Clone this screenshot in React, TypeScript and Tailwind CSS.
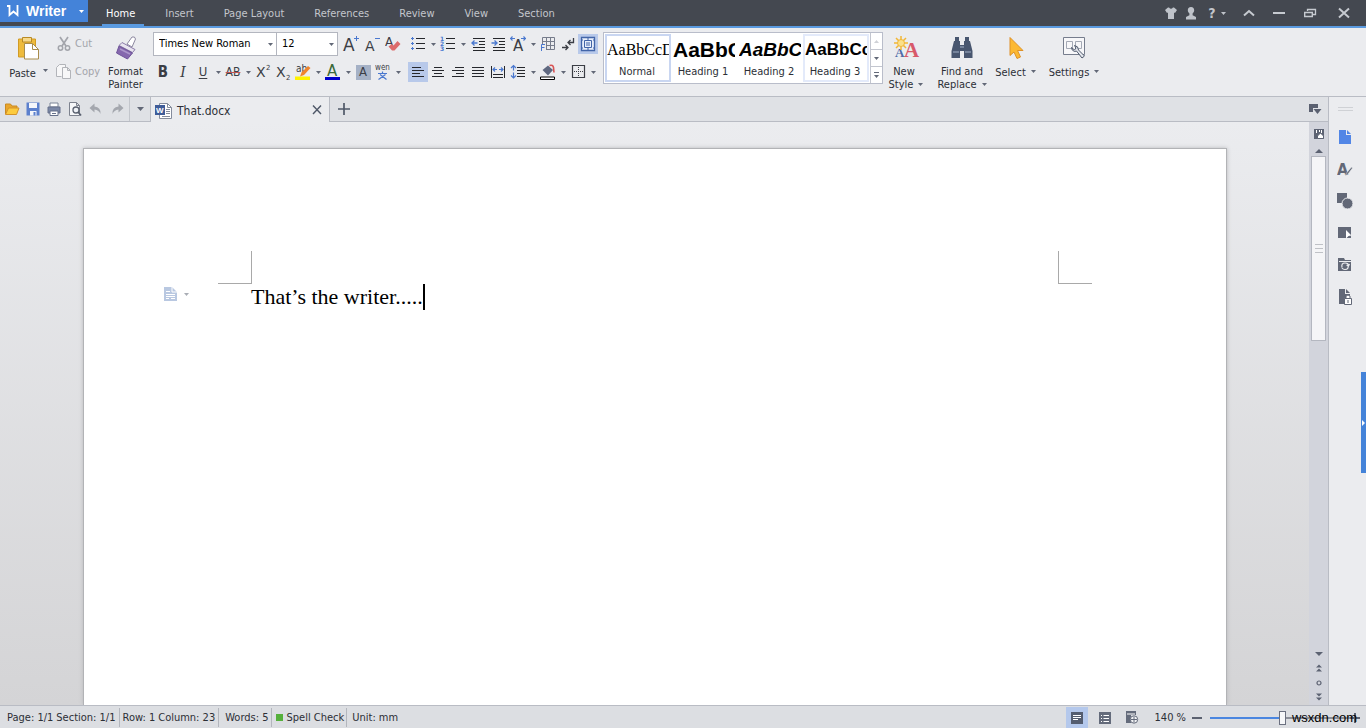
import type { ReactNode } from 'react'
import clsx from 'clsx'

const menuTabs = ['Insert', 'Page Layout', 'References', 'Review', 'View', 'Section']

const styles = [
  { name: 'Normal', sample: 'AaBbCcD', font: "font-['Liberation_Serif',serif] text-[16px]", border: 'border-[#c9d6f1]' },
  { name: 'Heading 1', sample: 'AaBbC', font: "font-['Liberation_Sans',sans-serif] text-[21px] font-bold", border: 'border-white' },
  { name: 'Heading 2', sample: 'AaBbC', font: "font-['Liberation_Sans',sans-serif] text-[19px] font-bold italic", border: 'border-white' },
  { name: 'Heading 3', sample: 'AaBbCc', font: "font-['Liberation_Sans',sans-serif] text-[17px] font-bold", border: 'border-[#e3eafa]' },
]

const INK = '#3b3e45'
const BLUE = '#4a78cf'
const SLATE = '#626877'

type IconProps = { children: ReactNode; size?: number; className?: string }

function Icon({ children, size = 16, className }: IconProps) {
  return (
    <svg width={size} height={size} viewBox={`0 0 ${size} ${size}`} fill="none" className={clsx('shrink-0', className)} aria-hidden="true">
      {children}
    </svg>
  )
}

function Glyph({ x, y, size, fill = INK, font = 'DejaVu Sans', bold, children }: { x: number; y: number; size: number; fill?: string; font?: string; bold?: boolean; children: string }) {
  return (
    <text x={x} y={y} fontSize={size} fill={fill} fontFamily={font} fontWeight={bold ? 'bold' : 'normal'}>
      {children}
    </text>
  )
}

function Caret({ color = SLATE, className }: { color?: string; className?: string }) {
  return (
    <svg width="5" height="3" viewBox="0 0 5 3" className={clsx('shrink-0', className)} aria-hidden="true">
      <path d="M0 0h5L2.500 3z" fill={color} />
    </svg>
  )
}

function Tool({ label, active, children }: { label: string; active?: boolean; children: ReactNode }) {
  return (
    <button aria-label={label} title={label} className={clsx('flex h-5 w-5 shrink-0 items-center justify-center', active && 'bg-[#b8c9ea]')}>
      {children}
    </button>
  )
}

function More({ label }: { label: string }) {
  return (
    <button aria-label={label} className="flex h-5 w-[10px] shrink-0 items-center justify-center">
      <Caret />
    </button>
  )
}

function Lines({ rows, color = '#25272c' }: { rows: number[][]; color?: string }) {
  return (
    <g fill={color} shapeRendering="crispEdges">
      {rows.map(([x, y, w], i) => (
        <rect key={i} x={x} y={y} width={w} height="1" />
      ))}
    </g>
  )
}

function Combo({ label, value, options, className }: { label: string; value: string; options: string[]; className: string }) {
  return (
    <div className={clsx('relative h-6 border border-[#b3b6bf] bg-white', className)}>
      <select aria-label={label} defaultValue={value} className="h-full w-full appearance-none bg-transparent pl-[5px] text-black outline-none">
        {options.map((o) => (
          <option key={o}>{o}</option>
        ))}
      </select>
      <Caret className="pointer-events-none absolute top-[10px] right-[3px]" />
    </div>
  )
}

function TitleBar() {
  return (
    <header className="flex h-7 shrink-0 items-start border-b-2 border-[#5a9ae0] bg-[#444850] text-[#c3c6cc]">
      <button className="flex h-[22px] w-[88px] items-center bg-[#4483d9] pl-[7px] font-['Liberation_Sans',sans-serif] text-[14px] font-bold text-white">
        <Icon size={12} className="mr-[7px]">
          <path d="M0 1h2.500v9L6.500 6.500l4 3.500V0" stroke="#fff" strokeWidth="1.800" />
        </Icon>
        Writer
        <Caret color="#fff" className="mr-1 ml-auto" />
      </button>
      <nav className="flex h-[26px] items-end pl-[14px]">
        <button className="flex h-[26px] items-center border-b-2 border-[#5a9ae0] pt-1 pr-[9px] pl-1 text-white">Home</button>
        <div className="flex pl-[6px]">
          {menuTabs.map((tab) => (
            <button key={tab} className="flex h-[26px] items-center px-[15px] pt-[2px]">
              {tab}
            </button>
          ))}
        </div>
      </nav>
      <div className="ml-auto flex h-[26px] items-center pr-[15px]">
        <button aria-label="Skin" className="mr-[6px]">
          <Icon size={14}>
            <path d="M4 1.500L1 4l2 3 1-.5V13h6V6.500l1 .5 2-3-3-2.500H9Q7 4 5 1.500z" fill="#bfc3ca" />
          </Icon>
        </button>
        <button aria-label="Account" className="mr-2">
          <Icon size={14}>
            <path d="M7 1c2.200 0 3.200 1.600 3.200 3.300C10.200 6 9.300 6.700 8.600 7.500v1.800L12 11v2.500H2V11l3.400-1.700V7.500C4.700 6.700 3.800 6 3.800 4.300 3.800 2.600 4.800 1 7 1z" fill="#bfc3ca" />
          </Icon>
        </button>
        <button aria-label="Help" className="mr-4 flex items-center gap-[3px]">
          <span className="w-3 text-center text-[14px] font-bold">?</span>
          <Caret color="#bfc3ca" />
        </button>
        <button aria-label="Collapse ribbon" className="mr-4">
          <Icon size={14}>
            <path d="M2 9.500L7 5l5 4.500" stroke="#c6cad0" strokeWidth="2" />
          </Icon>
        </button>
        <button aria-label="Minimize" className="mr-[17px]">
          <Icon size={14}>
            <path d="M1 7h12" stroke="#c6cad0" strokeWidth="2" />
          </Icon>
        </button>
        <button aria-label="Restore" className="mr-5">
          <Icon size={14}>
            <path d="M4.500 5V3.500h8v5H10M4 3.500h9" stroke="#c6cad0" strokeWidth="1.300" />
            <path d="M1.700 6.500h7.600v4H1.700zM1 6.500h9" stroke="#c6cad0" strokeWidth="1.400" />
          </Icon>
        </button>
        <button aria-label="Close">
          <Icon size={14}>
            <path d="M2 2.500l10 9M12 2.500l-10 9" stroke="#c6cad0" strokeWidth="2" />
          </Icon>
        </button>
      </div>
    </header>
  )
}

function Clipboard() {
  return (
    <div className="flex pt-2">
      <button className="flex w-[54px] flex-col items-center pl-[3px]">
        <Icon size={24}>
          <path d="M1.500 3h17v18h-17z" fill="#eebb3c" stroke="#d19b25" />
          <path d="M5.500 1.500h9V6h-9z" fill="#f7d98b" stroke="#b98a25" />
          <path d="M7.500 7.500h8l6 6V23h-14z" fill="#fff" stroke="#a98d4c" />
          <path d="M15.500 7.500v6h6" stroke="#a98d4c" />
        </Icon>
        <span className="mt-[6px] flex gap-[7px]">
          Paste <Caret className="mt-[3px]" />
        </span>
      </button>
      <div className="flex w-[47px] flex-col gap-3 pl-[2px] text-[#a3a5ab]">
        <button className="flex h-4 items-center gap-[3px]">
          <Icon>
            <path d="M4 1l6 9M12 1L6 10" stroke="#a3a5ab" strokeWidth="1.700" />
            <circle cx="4.500" cy="12" r="2.200" stroke="#a3a5ab" strokeWidth="1.500" />
            <circle cx="11.500" cy="12" r="2.200" stroke="#a3a5ab" strokeWidth="1.500" />
          </Icon>
          Cut
        </button>
        <button className="flex h-4 items-center gap-[3px]">
          <Icon>
            <path d="M5.500 12.500h-5v-9l3-3h6v3" fill="#f7f7f8" stroke="#b2b4b9" />
            <path d="M6.500 3.500h5l3 3v8h-8zM11.500 3.500v3h3" fill="#f7f7f8" stroke="#b2b4b9" />
          </Icon>
          Copy
        </button>
      </div>
      <button className="flex w-[49px] flex-col items-center leading-[13px]">
        <Icon size={24}>
          <path d="M13 8l5-7q3-1 3.500 2L18 11z" fill="#fff" stroke="#8d88a0" />
          <path d="M8 6.500l13 7-2.500 3L5 9.500z" fill="#e9e5f0" stroke="#8a7ba8" />
          <path d="M5 10l13.500 7-5 6L2.500 17z" fill="#8568ae" stroke="#70559a" />
          <path d="M6 13l10 5" stroke="#ad98cc" strokeWidth="1.500" />
        </Icon>
        <span className="mt-[5px]">
          Format
          <br />
          Painter
        </span>
      </button>
    </div>
  )
}

function FontTools() {
  return (
    <div className="ml-[3px] flex flex-col gap-[6px] pt-1">
      <div className="flex h-6 items-center">
        <Combo label="Font" value="Times New Roman" options={['Times New Roman', 'Arial', 'Tahoma']} className="w-[124px]" />
        <Combo label="Font size" value="12" options={['10', '11', '12', '14']} className="-ml-px w-[62px]" />
        <div className="mr-[5px] flex gap-px pl-[3px]">
          <Tool label="Grow font">
            <Icon size={18}>
              <Glyph x={1} y={16} size={17}>A</Glyph>
              <path d="M14.500 1v5M12 3.500h5" stroke={BLUE} />
            </Icon>
          </Tool>
          <Tool label="Shrink font">
            <Icon size={18}>
              <Glyph x={2} y={16} size={14}>A</Glyph>
              <path d="M12 3.500h5" stroke={BLUE} />
            </Icon>
          </Tool>
          <Tool label="Clear formatting">
            <Icon>
              <Glyph x={0} y={10} size={12}>A</Glyph>
              <path d="M3.500 10.500L7 8l1.500 1.500L12.500 5l3 3-6 6.500H7z" fill="#dd6b6b" />
            </Icon>
          </Tool>
        </div>
        <Tool label="Bullets">
          <Icon>
            <Lines rows={[[6, 2, 9], [6, 7, 9], [6, 12, 9]]} />
            <path d="M2.500 1v3M1 2.500h3M2.500 6v3M1 7.500h3M2.500 11v3M1 12.500h3" stroke={BLUE} />
          </Icon>
        </Tool>
        <More label="Bullet options" />
        <Tool label="Numbering">
          <Icon>
            <Lines rows={[[6, 2, 9], [6, 7, 9], [6, 12, 9]]} />
            <Glyph x={0} y={5} size={6} fill={BLUE} bold>1</Glyph>
            <Glyph x={0} y={10} size={6} fill={BLUE} bold>2</Glyph>
            <Glyph x={0} y={15} size={6} fill={BLUE} bold>3</Glyph>
          </Icon>
        </Tool>
        <More label="Numbering options" />
        <Tool label="Decrease indent">
          <Icon>
            <Lines rows={[[3, 2, 12], [9, 5, 6], [9, 8, 6], [3, 11, 12], [3, 14, 12]]} />
            <path d="M1.500 7h6M4.500 4.500L2 7l2.500 2.500" stroke={BLUE} strokeWidth="1.300" />
          </Icon>
        </Tool>
        <Tool label="Increase indent">
          <Icon>
            <Lines rows={[[3, 2, 12], [9, 5, 6], [9, 8, 6], [3, 11, 12], [3, 14, 12]]} />
            <path d="M1.500 7h6M4.500 4.500L7 7 4.500 9.500" stroke={BLUE} strokeWidth="1.300" />
          </Icon>
        </Tool>
        <Tool label="Asian layout">
          <Icon>
            <Glyph x={3} y={15} size={15}>A</Glyph>
            <path d="M0 2.500h5M2.500 .5L.5 2.500l2 2M11 2.500h5M13.500 .5l2 2-2 2" stroke={BLUE} strokeWidth="1.200" />
          </Icon>
        </Tool>
        <More label="Asian layout options" />
        <Tool label="Insert table">
          <Icon>
            <path d="M2.500 1.500h12v12h-12zM6.500 1.500v12M10.500 1.500v12M2.500 5.500h12M2.500 9.500h12" stroke="#767c8b" />
            <path d="M1 8h5v7H1z" fill="#ebecef" />
            <path d="M1.500 15V8.500H5M1.500 11.500h3" stroke={BLUE} />
          </Icon>
        </Tool>
        <Tool label="Show marks">
          <Icon>
            <path d="M13.500 2v4.500H8M10.500 4L8 6.500 10.500 9" stroke={INK} strokeWidth="1.300" />
            <path d="M2 11.500h6M5.500 9L8 11.500 5.500 14" stroke={INK} strokeWidth="1.300" />
          </Icon>
        </Tool>
        <Tool label="Text box" active>
          <Icon>
            <path d="M1.500 1.500h13v13h-13z" fill="#e8effb" stroke="#4265a8" strokeWidth="1.300" />
            <path d="M4.500 4.500h7v7h-7zM2 4h1M2 12h1M13 4h1M13 12h1M6 7h4M6 9h4M8 2v2M8 12v2" stroke="#4265a8" />
          </Icon>
        </Tool>
      </div>
      <div className="flex h-5 items-center">
        <Tool label="Bold">
          <span className="text-[15px] font-bold text-[#3b3e45]">B</span>
        </Tool>
        <Tool label="Italic">
          <span className="font-['DejaVu_Serif',serif] text-[14px] text-[#3b3e45] italic">I</span>
        </Tool>
        <Tool label="Underline">
          <span className="text-[13px] text-[#3b3e45] underline underline-offset-2">U</span>
        </Tool>
        <More label="Underline options" />
        <Tool label="Strikethrough">
          <span className="text-[12px] text-[#3b3e45] line-through decoration-[#c25656]">AB</span>
        </Tool>
        <More label="Strikethrough options" />
        <Tool label="Superscript">
          <Icon>
            <Glyph x={1} y={13} size={14}>X</Glyph>
            <Glyph x={11} y={6} size={7}>2</Glyph>
          </Icon>
        </Tool>
        <Tool label="Subscript">
          <Icon>
            <Glyph x={1} y={13} size={14}>X</Glyph>
            <Glyph x={11} y={16} size={7}>2</Glyph>
          </Icon>
        </Tool>
        <Tool label="Highlight">
          <Icon>
            <path d="M0 12.500h15V16H0z" fill="#fff200" />
            <Glyph x={1} y={8} size={10} font="DejaVu Sans Condensed">ab</Glyph>
            <path d="M5 12.500l1.500-4L13 2l2.500 2L9 11z" fill="#f0852d" />
          </Icon>
        </Tool>
        <More label="Highlight color" />
        <Tool label="Font color">
          <Icon>
            <path d="M0 13h15v3H0z" fill="#0000cd" />
            <Glyph x={2} y={12} size={15} fill="#3a6a3a">A</Glyph>
          </Icon>
        </Tool>
        <More label="Font color options" />
        <Tool label="Character shading">
          <span className="flex h-[15px] w-[15px] items-center justify-center bg-[#a5b1c6] text-[13px] text-[#3b3e45]">A</span>
        </Tool>
        <Tool label="Phonetic guide">
          <Icon>
            <Glyph x={0} y={6} size={8} font="DejaVu Sans Condensed">wén</Glyph>
            <path d="M3 9.500h9M7.500 7.500v2M5 10.500l6.500 5M10.500 10.500L3.500 15.500" stroke={BLUE} strokeWidth="1.200" />
          </Icon>
        </Tool>
        <More label="Phonetic options" />
        <div className="w-[5px]" />
        <Tool label="Align left" active>
          <Icon>
            <Lines rows={[[2, 3, 9], [2, 6, 12], [2, 9, 8], [2, 12, 12]]} />
          </Icon>
        </Tool>
        <Tool label="Center">
          <Icon>
            <Lines rows={[[4, 3, 8], [2, 6, 12], [4, 9, 8], [2, 12, 12]]} />
          </Icon>
        </Tool>
        <Tool label="Align right">
          <Icon>
            <Lines rows={[[5, 3, 9], [2, 6, 12], [6, 9, 8], [2, 12, 12]]} />
          </Icon>
        </Tool>
        <Tool label="Justify">
          <Icon>
            <Lines rows={[[2, 3, 12], [2, 6, 12], [2, 9, 12], [2, 12, 12]]} />
          </Icon>
        </Tool>
        <Tool label="Distribute">
          <Icon>
            <path d="M1.500 2v12M14.500 2v12M3 10.500h10M3 13.500h10" stroke="#25272c" />
            <path d="M3 5.500h4M5 3.500l-2 2 2 2M9 5.500h4M11 3.500l2 2-2 2" stroke={BLUE} strokeWidth="1.200" />
          </Icon>
        </Tool>
        <Tool label="Line spacing">
          <Icon>
            <Lines rows={[[7, 3, 8], [7, 6, 8], [7, 9, 8], [7, 12, 8]]} />
            <path d="M3.500 1.500v5M1 4l2.500-2.500L6 4M3.500 8.500v5M1 11.500L3.500 14 6 11.500" stroke={BLUE} strokeWidth="1.200" />
          </Icon>
        </Tool>
        <More label="Line spacing options" />
        <Tool label="Shading">
          <Icon>
            <path d="M.5 13h14v2.500H.5z" fill="#fff" stroke="#000" />
            <path d="M2.500 6L8 1.500 13 6l-5 5.500z" fill="#5f6880" />
            <path d="M9.500 1.500q3.500-1 4 2l.5 5" stroke="#d95454" strokeWidth="1.600" />
          </Icon>
        </Tool>
        <More label="Shading color" />
        <Tool label="Borders">
          <Icon>
            <path d="M2.500 1.500h12v12h-12z" stroke={INK} strokeWidth="1.200" />
            <path d="M8.500 3v9M4 7.500h9" stroke={INK} strokeDasharray="1 1" />
          </Icon>
        </Tool>
        <More label="Border options" />
      </div>
    </div>
  )
}

function StyleGallery() {
  return (
    <div className="mt-1 ml-[5px] flex h-[52px] shrink-0 border border-[#b9bdca] bg-white">
      <div className="flex p-px">
        {styles.map((s) => (
          <button key={s.name} className={clsx('flex w-[66px] flex-col overflow-hidden border-2 pt-[2px]', s.border)}>
            <span className={clsx('block h-6 w-full overflow-hidden text-left leading-[24px] whitespace-nowrap text-black', s.font)}>{s.sample}</span>
            <span className="w-full pt-[3px] pr-[2px] text-center leading-[13px]">{s.name}</span>
          </button>
        ))}
      </div>
      <div className="flex w-3 flex-col divide-y divide-[#c3c6cf] border-l border-[#c3c6cf]">
        <button aria-label="Previous styles" className="flex flex-1 items-center justify-center">
          <Caret color="#cfd1d6" className="rotate-180" />
        </button>
        <button aria-label="Next styles" className="flex flex-1 items-center justify-center">
          <Caret />
        </button>
        <button aria-label="All styles" className="flex flex-1 flex-col items-center justify-center gap-[2px]">
          <span className="h-px w-[5px] bg-[#626877]" />
          <Caret />
        </button>
      </div>
    </div>
  )
}

function EditTools() {
  return (
    <div className="flex shrink-0 pt-2 leading-[13px]">
      <button className="flex w-[46px] flex-col items-center">
        <Icon size={24} className="overflow-visible">
          <Glyph x={1} y={21} size={13} fill="#4f6ba8" font="Liberation Serif" bold>A</Glyph>
          <Glyph x={10} y={21} size={21} fill="#d8596a" font="Liberation Serif" bold>A</Glyph>
          <path d="M7 0v14M0 7h14M2 2l10 10M12 2L2 12" stroke="#f2b737" strokeWidth="1.500" />
          <circle cx="7" cy="7" r="3.500" fill="#fbe08a" stroke="#f2b737" />
        </Icon>
        <span className="mt-[5px] pr-1">New</span>
        <span className="flex items-center gap-[5px]">
          Style <Caret />
        </span>
      </button>
      <button className="ml-[7px] flex w-[52px] flex-col items-center">
        <Icon size={24}>
          <path d="M5 1h4v4H5zM15 1h4v4h-4zM4 5h6v4h4V5h6l2.500 10v7H14v-7h-4v7H1.500v-7z" fill="#48566f" />
          <path d="M3 16h6M15 16h6M10 11h4" stroke="#8492ab" strokeWidth="1.500" />
        </Icon>
        <span className="mt-[5px] whitespace-nowrap">Find and</span>
        <span className="flex items-center gap-[5px]">
          Replace <Caret />
        </span>
      </button>
      <button className="ml-[7px] flex w-[41px] flex-col items-center">
        <Icon size={24}>
          <path d="M6 1.500v18l4-3.500 3 6.500 3.500-1.500-3-6.500H19z" fill="#fcb933" stroke="#de9129" />
        </Icon>
        <span className="mt-[6px] flex gap-[5px]">
          Select <Caret className="mt-1" />
        </span>
      </button>
      <button className="ml-[13px] flex w-[50px] flex-col items-center">
        <Icon size={24}>
          <path d="M1.500 1.500h21v17h-21z" fill="#f7f7f9" stroke="#767d8d" />
          <path d="M4.500 5.500h6v7h-6zM13.500 5.500h6v7h-6z" stroke="#a4a9b5" />
          <path d="M9.500 11.500q0 3 3 4l2-.5 5.500 7 2.500-2-6-6q0-4-4-4.500l1.500 2.500-1.500 2z" fill="#e5e8ee" stroke="#4f596c" />
        </Icon>
        <span className="mt-[6px] flex gap-[5px]">
          Settings <Caret className="mt-1" />
        </span>
      </button>
    </div>
  )
}

function DocumentTabs() {
  return (
    <div className="flex h-[25px] shrink-0">
      <div className="flex w-[151px] items-center border-r border-b border-[#b9bcc4] bg-[#dfe1e5] pl-1">
        <div className="flex h-full items-center gap-[5px] border-r border-[#c3c6cc] pr-1">
          <button aria-label="Open">
            <Icon>
              <path d="M1.500 13V3h5l1.500 2h5v3" fill="#e9a62c" stroke="#c98a22" />
              <path d="M1.500 13.500L4.500 7H15l-2.500 6.500z" fill="#fccb3e" stroke="#d4932a" />
            </Icon>
          </button>
          <button aria-label="Save">
            <Icon>
              <path d="M1.500 1.500h13v13h-13z" fill="#5c80cd" />
              <path d="M4 2h8v5H4zM5 10h6.500v4.500H5z" fill="#f4f6fb" />
              <path d="M8.500 11h2v3.500h-2z" fill="#5c80cd" />
            </Icon>
          </button>
          <button aria-label="Print">
            <Icon>
              <path d="M4 2h8v4H4z" fill="#fff" stroke="#7b8496" />
              <path d="M2 6h12v6H2z" fill="#7b88a6" stroke="#66718b" />
              <path d="M4 10h8v4.500H4z" fill="#fff" stroke="#66718b" />
              <path d="M6 12.500h4" stroke="#66718b" />
            </Icon>
          </button>
          <button aria-label="Print preview">
            <Icon>
              <path d="M2.500 1.500h7l3 3v10h-10zM9.500 1.500v3h3" fill="#f6f7f9" stroke="#7d828e" />
              <circle cx="9" cy="9" r="3" fill="#eef1f6" stroke="#59606f" strokeWidth="1.300" />
              <path d="M11 11l3 3.500" stroke="#59606f" strokeWidth="1.800" />
            </Icon>
          </button>
          <button aria-label="Undo">
            <Icon>
              <path d="M6.500 2.500v3Q13 6 12.500 13 11 9 6.500 8.500v3L1.500 7z" fill="#a4a7ae" />
            </Icon>
          </button>
          <button aria-label="Redo">
            <Icon>
              <path d="M9.500 2.500v3Q3 6 3.500 13 5 9 9.500 8.500v3l5-4.500z" fill="#a4a7ae" />
            </Icon>
          </button>
        </div>
        <button aria-label="Customize toolbar" className="flex flex-1 justify-center">
          <svg width="7" height="4" viewBox="0 0 7 4">
            <path d="M0 0h7L3.500 4z" fill={SLATE} />
          </svg>
        </button>
      </div>
      <div className="flex w-[179px] items-center border-r border-[#b9bcc4] pt-px pl-1">
        <Icon size={17}>
          <path d="M4.500 1.500h8l4 4v11h-12z" fill="#fff" stroke="#858c9c" />
          <path d="M11 7.500h4M11 9.500h4M11 11.500h4M7 14.500h8M12.500 1.500v4h4" stroke="#858c9c" />
          <path d="M0 3h10v10H0z" fill="#3f5c98" />
          <Glyph x={1} y={11} size={8} fill="#fff" font="Liberation Sans" bold>W</Glyph>
        </Icon>
        <span className="ml-[5px] pt-px text-[12px]">That.docx</span>
        <button aria-label="Close That.docx" className="mr-[5px] ml-auto">
          <Icon size={14}>
            <path d="M3 2.500l8 8.500M11 2.500L3 11" stroke="#4f5868" strokeWidth="1.400" />
          </Icon>
        </button>
      </div>
      <div className="flex flex-1 items-center justify-between border-b border-[#b9bcc4] bg-[#dfe1e5] pr-[6px] pl-[7px]">
        <button aria-label="New document">
          <Icon size={14}>
            <path d="M7 1v12M1 7h12" stroke="#4f5868" strokeWidth="1.700" />
          </Icon>
        </button>
        <button aria-label="Tab list">
          <Icon size={14}>
            <path d="M1 2h9v4H5v4H1z" fill="#5a6070" />
            <path d="M5.500 7h8l-4 5z" fill="#5a6070" />
          </Icon>
        </button>
      </div>
    </div>
  )
}

function DocumentView() {
  return (
    <main className="min-w-0 flex-1 overflow-hidden bg-linear-to-b from-[#ebecef] to-[#d4d4d6] pt-[26px] pr-[82px] pl-[83px]">
      <div className="h-full border border-b-0 border-[#b2b3b6] bg-white pt-[102px] shadow-[0_0_4px_#b8b8bb]">
        <div className="flex justify-between px-[134px]">
          <div className="h-[33px] w-[34px] border-r border-b border-[#a9a9a9]" />
          <div className="h-[33px] w-[34px] border-b border-l border-[#a9a9a9]" />
        </div>
        <div className="flex items-start">
          <button aria-label="Paragraph options" className="flex w-[167px] shrink-0 items-center gap-[5px] pt-[2px] pl-[79px]">
            <Icon>
              <path d="M1 1h8l5 5v9H1z" fill="#b9c8e1" />
              <path d="M9 1v5h5M3 5.500h4M3 8.500h9M3 10.500h9M3 12.500h3M8 12.500h4" stroke="#fff" />
            </Icon>
            <Caret color="#a9adb5" />
          </button>
          <p className="border-r-2 border-black font-['Liberation_Serif',serif] text-[22px] leading-[26px] text-black">That’s the writer.....</p>
        </div>
      </div>
    </main>
  )
}

function ScrollBar() {
  return (
    <div className="flex w-[19px] shrink-0 flex-col items-center bg-[#d2d4dc]">
      <button aria-label="Ruler" className="flex h-6 items-center">
        <Icon size={12}>
          <path d="M1 1h10v10H1z" fill="#5c6272" />
          <path d="M3.500 2v3M6.500 2v2M8.500 2v3" stroke="#fff" />
          <path d="M4.500 8L7.500 5l3 3v2.500h-6z" fill="#fff" stroke="#5c6272" />
        </Icon>
      </button>
      <button aria-label="Scroll up" className="flex h-[10px] items-center">
        <Icon size={8}>
          <path d="M0 6h8L4 2z" fill="#5c6272" />
        </Icon>
      </button>
      <div className="flex-1">
        <div className="flex h-[185px] w-[15px] flex-col items-center justify-center gap-[3px] border border-[#b4b7c0] bg-[#f5f5f7]">
          <span className="h-px w-2 bg-[#bfc1c6]" />
          <span className="h-px w-2 bg-[#bfc1c6]" />
          <span className="h-px w-2 bg-[#bfc1c6]" />
        </div>
      </div>
      <div className="flex flex-col pb-px">
        <button aria-label="Scroll down" className="flex h-[14px] items-center">
          <Icon size={8}>
            <path d="M0 2h8L4 6z" fill="#5c6272" />
          </Icon>
        </button>
        <button aria-label="Previous page" className="flex h-[14px] items-center">
          <Icon size={8}>
            <path d="M1 3.500h6L4 .5zM1 7.500h6l-3-3z" fill="#5c6272" />
          </Icon>
        </button>
        <button aria-label="Browse object" className="flex h-[15px] items-center">
          <Icon size={8}>
            <circle cx="4" cy="4" r="2" stroke="#5c6272" strokeWidth="1.200" />
          </Icon>
        </button>
        <button aria-label="Next page" className="flex h-[14px] items-center">
          <Icon size={8}>
            <path d="M1 .5h6l-3 3zM1 4.500h6l-3 3z" fill="#5c6272" />
          </Icon>
        </button>
      </div>
    </div>
  )
}

const sideTools = [
  { label: 'New', icon: <path d="M2 1h7v5h5v9H2zM10 1l4 4h-4z" fill="#5286e6" /> },
  {
    label: 'Styles',
    icon: (
      <>
        <Glyph x={0} y={14} size={16} fill={SLATE} font="DejaVu Sans Condensed" bold>A</Glyph>
        <path d="M8 15l1.500-3L14.500 6l1 1L11 13z" fill={SLATE} stroke="#ebecef" strokeWidth="0.500" />
      </>
    ),
  },
  {
    label: 'Shapes',
    icon: (
      <>
        <path d="M0 0h10v10H0z" fill={SLATE} />
        <circle cx="10.500" cy="10.500" r="5.500" fill={SLATE} stroke="#ebecef" />
      </>
    ),
  },
  {
    label: 'Selection pane',
    icon: (
      <>
        <path d="M1 2h13v11H1z" fill={SLATE} />
        <path d="M9 5l5.500 5.500-3 .5L9 13.500z" fill="#fff" />
      </>
    ),
  },
  {
    label: 'Resources',
    icon: (
      <>
        <path d="M1 1h6l1 2h6v11H1z" fill={SLATE} />
        <path d="M2 4.500h12" stroke="#ebecef" />
        <path d="M5 10.500Q4 6 8 6t3 3M11 8Q12 12.500 8 12.500 6 12.500 5 11M9.500 8l2 1 1-2" stroke="#ebecef" strokeWidth="1.200" />
      </>
    ),
  },
  {
    label: 'Protect',
    icon: (
      <>
        <path d="M2 0h6v5h5v10H2zM9 0l4 4H9z" fill={SLATE} />
        <path d="M7.500 9.500h7v6h-7zM9 9V7q2-2 4 0v2" fill="#fff" stroke={SLATE} />
        <path d="M11 11v3" stroke={SLATE} />
      </>
    ),
  },
]

function SidePanel() {
  return (
    <aside className="relative flex w-[38px] shrink-0 flex-col items-center border-l border-[#b9bcc4] pr-[5px]">
      <div className="flex h-6 w-[15px] flex-col justify-center gap-[2px]">
        <span className="h-px bg-[#cfd1d5]" />
        <span className="h-px bg-[#cfd1d5]" />
      </div>
      {sideTools.map((t) => (
        <button key={t.label} aria-label={t.label} title={t.label} className="flex h-8 items-center">
          <Icon>{t.icon}</Icon>
        </button>
      ))}
      <button aria-label="Open panel" className="absolute top-[275px] right-0 flex h-[101px] w-[5px] items-center bg-[#4483d9]">
        <svg width="4" height="6" viewBox="0 0 4 6">
          <path d="M1 0v6l3-3z" fill="#fff" />
        </svg>
      </button>
    </aside>
  )
}

function StatusBar() {
  return (
    <footer className="relative flex h-[23px] shrink-0 items-center border-t border-[#b9bcc4] bg-[#dcdee2] pt-px whitespace-nowrap">
      <div className="flex divide-x divide-[#b3b6bd] leading-[19px]">
        <span className="flex gap-[3px] pr-[3px] pl-[7px]">
          <span>Page: 1/1</span>
          <span>Section: 1/1</span>
        </span>
        <span className="flex gap-[3px] px-[3px]">
          <span>Row: 1</span>
          <span>Column: 23</span>
        </span>
        <span className="pr-[3px] pl-[6px]">Words: 5</span>
        <button className="flex items-center gap-[3px] pr-[2px] pl-1">
          <span className="h-[7px] w-[7px] bg-[#55b03c]" />
          Spell Check
        </button>
        <span className="pl-[5px]">Unit: mm</span>
      </div>
      <div className="ml-auto flex h-full items-center pr-[6px]">
        <button aria-label="Print layout" className="flex h-[21px] w-[22px] items-center justify-center bg-[#b4c8ec]">
          <Icon size={12}>
            <path d="M0 0h12v12H0z" fill="#545d70" />
            <path d="M2 3.500h8M2 5.500h8M2 7.500h5" stroke="#fff" />
          </Icon>
        </button>
        <button aria-label="Outline" className="ml-[11px]">
          <Icon size={12}>
            <path d="M0 0h12v12H0z" fill="#646b7b" />
            <path d="M2 3.500h1M2 6.500h1M2 9.500h1M4.500 3.500H10M4.500 6.500H10M4.500 9.500H10" stroke="#fff" />
          </Icon>
        </button>
        <button aria-label="Web layout" className="ml-[15px]">
          <Icon size={13}>
            <path d="M0 0h10v4H5v8H0z" fill="#646b7b" />
            <path d="M1 3h8" stroke="#fff" />
            <circle cx="8" cy="8.500" r="3.700" fill="#f2f3f5" stroke="#646b7b" />
            <path d="M5 8.500h6M8 5.500v6" stroke="#646b7b" />
          </Icon>
        </button>
        <button className="ml-4">140 %</button>
        <button aria-label="Zoom out" className="ml-[6px] flex h-4 w-[10px] items-center">
          <span className="h-[2px] w-full bg-[#5b6170]" />
        </button>
        <input
          type="range"
          aria-label="Zoom"
          min={0}
          max={100}
          defaultValue={52}
          className="ml-2 h-[14px] w-[140px] appearance-none bg-[linear-gradient(to_right,#4a86e0_52%,#8b8f99_52%)] bg-[length:100%_2px] bg-center bg-no-repeat [&::-webkit-slider-thumb]:h-[14px] [&::-webkit-slider-thumb]:w-[7px] [&::-webkit-slider-thumb]:appearance-none [&::-webkit-slider-thumb]:border [&::-webkit-slider-thumb]:border-[#6b7080] [&::-webkit-slider-thumb]:bg-[#f6f7f9]"
        />
        <button aria-label="Zoom in">
          <Icon size={10}>
            <path d="M5 0v10M0 5h10" stroke="#5b6170" strokeWidth="2" />
          </Icon>
        </button>
      </div>
      <span className="pointer-events-none absolute right-[9px] bottom-[2px] font-['Liberation_Sans',sans-serif] text-[13px] leading-[16px] text-black">wsxdn.com</span>
    </footer>
  )
}

export default function App() {
  return (
    <div className="flex h-screen flex-col overflow-hidden bg-[#ebecef] font-['DejaVu_Sans_Condensed','DejaVu_Sans',sans-serif] text-[11px] leading-[16px] text-[#2c2f36]">
      <TitleBar />
      <div className="flex h-[69px] shrink-0 items-start border-b border-[#b9bcc4]">
        <Clipboard />
        <FontTools />
        <StyleGallery />
        <EditTools />
      </div>
      <div className="flex min-h-0 flex-1">
        <div className="flex min-w-0 flex-1 flex-col">
          <DocumentTabs />
          <div className="flex min-h-0 flex-1">
            <DocumentView />
            <ScrollBar />
          </div>
        </div>
        <SidePanel />
      </div>
      <StatusBar />
    </div>
  )
}
